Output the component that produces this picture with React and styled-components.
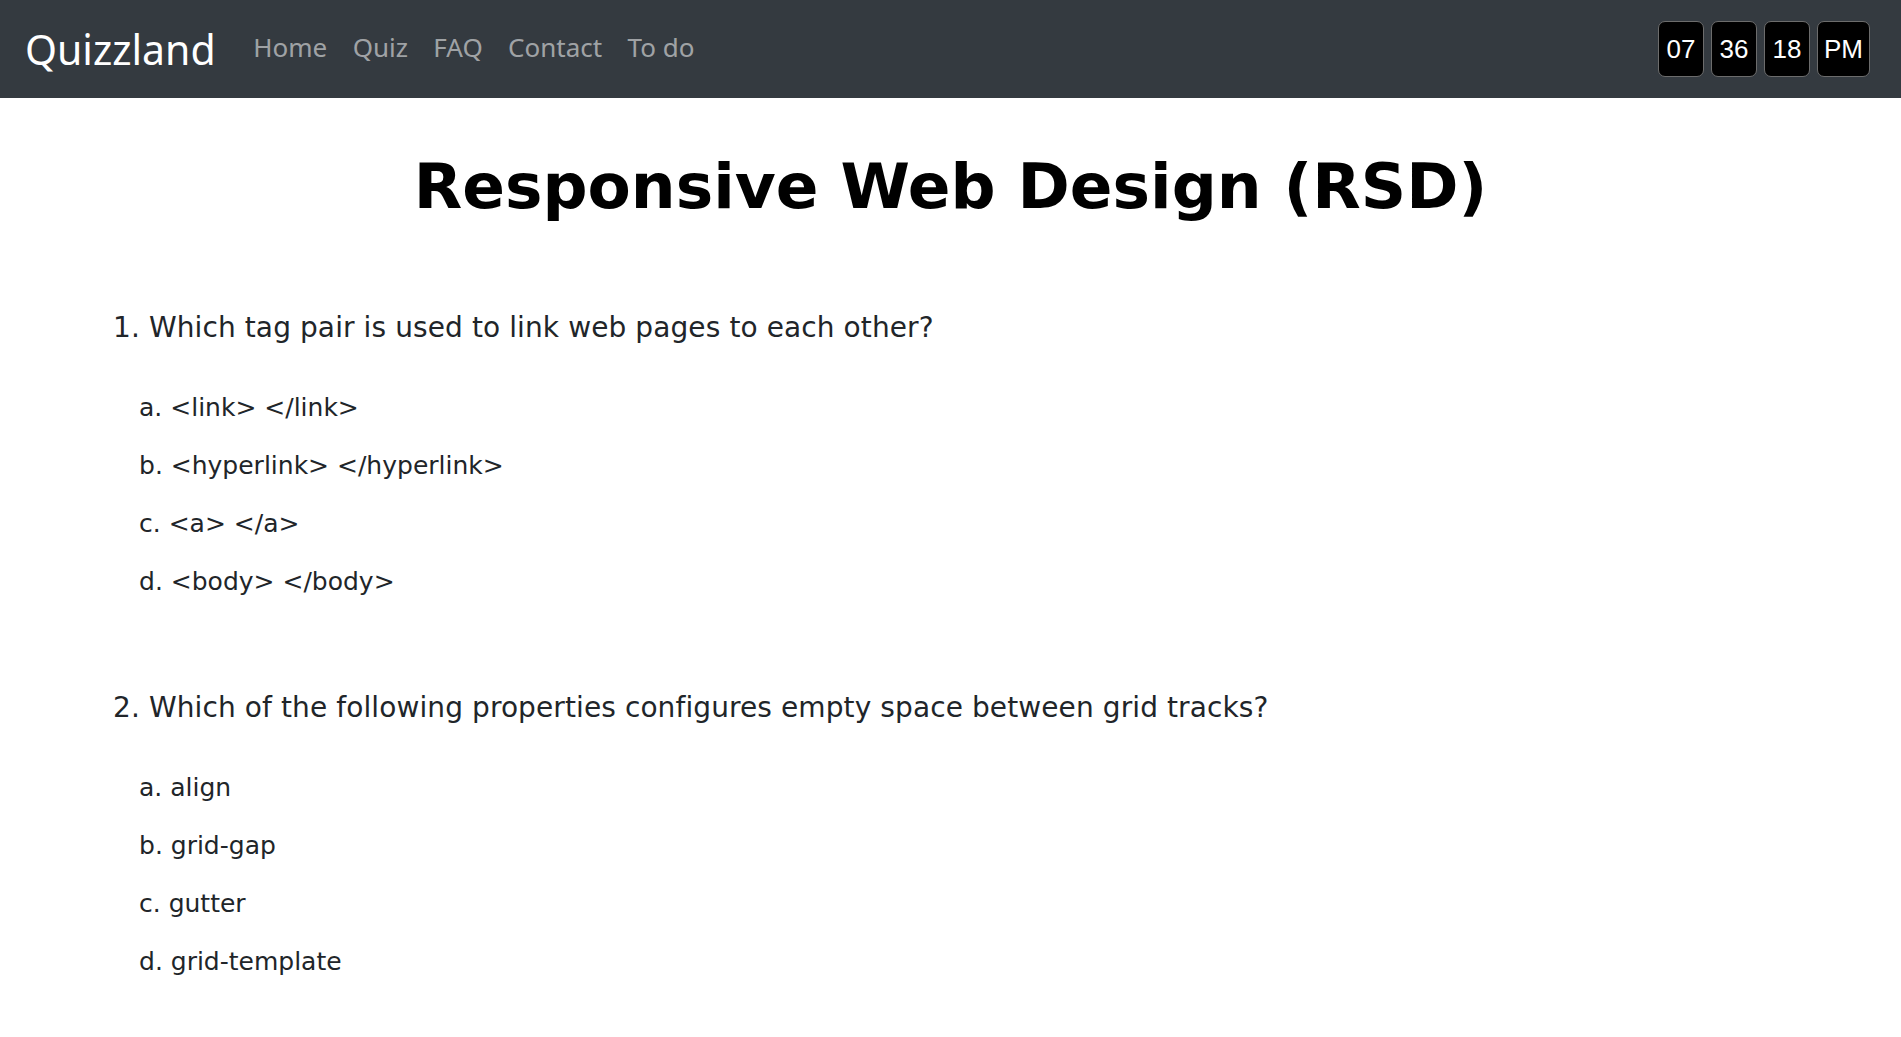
import React from "react";
import styled, { createGlobalStyle } from "styled-components";

const Global = createGlobalStyle`
  html, body { margin: 0; padding: 0; background: #fff; }
  body { font-family: "DejaVu Sans", Verdana, sans-serif; color: #212529; }
  * { box-sizing: border-box; }
`;

const Nav = styled.nav`
  height: 98px;
  background: #343a40;
  display: flex;
  align-items: center;
  padding: 0 31px 0 25px;
`;

const Brand = styled.a`
  font-family: "Noto Sans", sans-serif;
  font-size: 41px;
  color: #fff;
  text-decoration: none;
  margin-right: 25px;
  margin-top: -1px;
`;

const Links = styled.ul`
  display: flex;
  list-style: none;
  margin: -4px 0 0;
  padding: 0;
`;

const LinkItem = styled.li`
  a {
    display: block;
    font-family: "Noto Sans", sans-serif;
    font-size: 26px;
    color: rgba(255, 255, 255, 0.55);
    text-decoration: none;
    padding: 0 12.7px;
  }
`;

const Clock = styled.div`
  margin-left: auto;
  display: flex;
  gap: 7px;
`;

const ClockBox = styled.div`
  height: 56px;
  min-width: 46px;
  padding: 0 6px;
  background: #000;
  border: 1px solid #6c6c6c;
  border-radius: 7px;
  color: #fff;
  font-family: "Liberation Sans", Arial, sans-serif;
  font-size: 26px;
  display: flex;
  align-items: center;
  justify-content: center;
`;

const Main = styled.main`
  padding: 0 113px;
`;

const Title = styled.h1`
  margin: 51px 0 0;
  text-align: center;
  font-family: "DejaVu Sans", Verdana, sans-serif;
  font-weight: bold;
  font-size: 63px;
  line-height: 1.2;
  color: #000;
`;

const Questions = styled.ol`
  list-style: none;
  margin: 0;
  padding: 0;
`;

const Question = styled.li`
  margin-top: ${(p) => p.$top}px;
`;

const QText = styled.div`
  font-size: 28px;
  line-height: 40px;
  letter-spacing: 0.1px;
`;

const Answers = styled.ol`
  list-style: none;
  margin: 40px 0 0;
  padding: 0 0 0 26px;
  display: flex;
  flex-direction: column;
  gap: 18px;
`;

const Answer = styled.li`
  font-size: 25px;
  line-height: 40px;
`;

const quiz = [
  {
    q: "Which tag pair is used to link web pages to each other?",
    a: ["<link> </link>", "<hyperlink> </hyperlink>", "<a> </a>", "<body> </body>"],
  },
  {
    q: "Which of the following properties configures empty space between grid tracks?",
    a: ["align", "grid-gap", "gutter", "grid-template"],
  },
];

export default function App() {
  return (
    <>
      <Global />
      <Nav>
        <Brand href="#">Quizzland</Brand>
        <Links>
          {["Home", "Quiz", "FAQ", "Contact", "To do"].map((l) => (
            <LinkItem key={l}>
              <a href="#">{l}</a>
            </LinkItem>
          ))}
        </Links>
        <Clock>
          <ClockBox>07</ClockBox>
          <ClockBox>36</ClockBox>
          <ClockBox>18</ClockBox>
          <ClockBox>PM</ClockBox>
        </Clock>
      </Nav>
      <Main>
        <Title>Responsive Web Design (RSD)</Title>
        <Questions>
          {quiz.map((item, i) => (
            <Question key={i} $top={i === 0 ? 83 : 86}>
              <QText>
                {i + 1}. {item.q}
              </QText>
              <Answers>
                {item.a.map((ans, j) => (
                  <Answer key={j}>
                    {"abcd"[j]}. {ans}
                  </Answer>
                ))}
              </Answers>
            </Question>
          ))}
        </Questions>
      </Main>
    </>
  );
}
